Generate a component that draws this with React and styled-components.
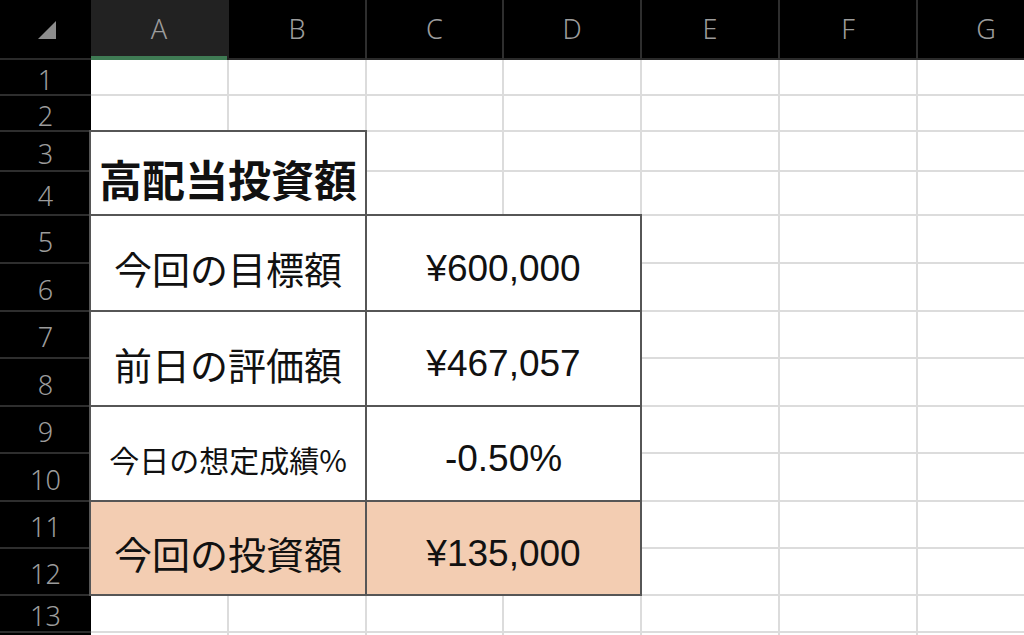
import styled, { createGlobalStyle } from "styled-components";

const GlobalStyle = createGlobalStyle`
  html, body {
    margin: 0;
    padding: 0;
    background: #ffffff;
    overflow: hidden;
  }
`;

const columns = ["A", "B", "C", "D", "E", "F", "G"];
const rowHeights = [36, 36, 40, 44, 48, 48, 47, 48, 47, 48, 47, 47, 37, 40];

const blocks = [
  { row: 3, col: 1, text: "高配当投資額", kind: "title" },
  { row: 5, col: 1, text: "今回の目標額", kind: "label" },
  { row: 5, col: 3, text: "¥600,000", kind: "value" },
  { row: 7, col: 1, text: "前日の評価額", kind: "label" },
  { row: 7, col: 3, text: "¥467,057", kind: "value" },
  { row: 9, col: 1, text: "今日の想定成績%", kind: "small" },
  { row: 9, col: 3, text: "-0.50%", kind: "value" },
  { row: 11, col: 1, text: "今回の投資額", kind: "label", peach: true },
  { row: 11, col: 3, text: "¥135,000", kind: "value", peach: true },
];

const fonts = {
  title: `700 43px "Noto Sans CJK JP", sans-serif`,
  label: `400 38px "Noto Sans CJK JP", sans-serif`,
  small: `400 30px "Noto Sans CJK JP", sans-serif`,
  value: `400 37px "Liberation Sans", "Noto Sans CJK JP", sans-serif`,
};

export default function App() {
  return (
    <>
      <GlobalStyle />
      <Sheet>
        <Corner>
          <svg width="20" height="20" viewBox="0 0 20 20">
            <polygon points="19,1 19,19 1,19" fill="#8c8c8c" />
          </svg>
        </Corner>
        {columns.map((c, i) => (
          <ColHeader key={c} $col={i + 2} $active={c === "A"}>
            {c}
          </ColHeader>
        ))}
        {rowHeights.map((_, r) => (
          <RowHeader key={r} $row={r + 2}>
            {r < 13 ? r + 1 : ""}
          </RowHeader>
        ))}
        {rowHeights.map((_, r) =>
          columns.map((c, i) => (
            <Cell key={`${c}${r}`} $row={r + 2} $col={i + 2} />
          ))
        )}
        {blocks.map((b) => (
          <Merged
            key={`${b.row}-${b.col}`}
            $row={b.row + 1}
            $col={b.col + 1}
            $peach={b.peach}
            $font={fonts[b.kind]}
          >
            {b.text}
          </Merged>
        ))}
      </Sheet>
    </>
  );
}

const Sheet = styled.div`
  display: grid;
  grid-template-columns: 91px 138px 138px 137px 138px 138px 138px 138px;
  grid-template-rows: 60px ${rowHeights.map((h) => `${h}px`).join(" ")};
  width: 1024px;
  height: 635px;
  overflow: hidden;
  background: #000;
`;

const Corner = styled.div`
  grid-row: 1;
  grid-column: 1;
  background: #000;
  display: flex;
  align-items: center;
  justify-content: center;
  padding: 2px 0 0 2px;
  border-bottom: 2px solid #2a2a2a;
`;

const ColHeader = styled.div`
  grid-row: 1;
  grid-column: ${(p) => p.$col};
  background: ${(p) => (p.$active ? "#222222" : "#000000")};
  border-right: 2px solid ${(p) => (p.$active ? "#222222" : "#2e2e2e")};
  box-shadow: ${(p) => (p.$active ? "inset 0 -4px 0 #3f7b54" : "inset 0 -2px 0 #2a2a2a")};
  color: #9c9c9c;
  font: 300 27px "Noto Sans", "DejaVu Sans", sans-serif;
  display: flex;
  align-items: center;
  justify-content: center;
  padding-bottom: 4px;
`;

const RowHeader = styled.div`
  grid-row: ${(p) => p.$row};
  grid-column: 1;
  background: #000;
  border-bottom: 2px solid #2e2e2e;
  color: #9c9c9c;
  font: 300 27px "Noto Sans", "DejaVu Sans", sans-serif;
  display: flex;
  align-items: center;
  justify-content: center;
  padding-top: 4px;
`;

const Cell = styled.div`
  grid-row: ${(p) => p.$row};
  grid-column: ${(p) => p.$col};
  background: #ffffff;
  border-right: 2px solid #dcdcdc;
  border-bottom: 2px solid #dcdcdc;
`;

const Merged = styled.div`
  grid-row: ${(p) => p.$row} / span 2;
  grid-column: ${(p) => p.$col} / span 2;
  margin: -2px 0 0 -2px;
  border: 2px solid #565656;
  background: ${(p) => (p.$peach ? "#f3cdb2" : "#ffffff")};
  color: #111;
  font: ${(p) => p.$font};
  line-height: 1;
  display: flex;
  align-items: center;
  justify-content: center;
  padding-top: 10px;
  white-space: nowrap;
  z-index: 1;
`;
